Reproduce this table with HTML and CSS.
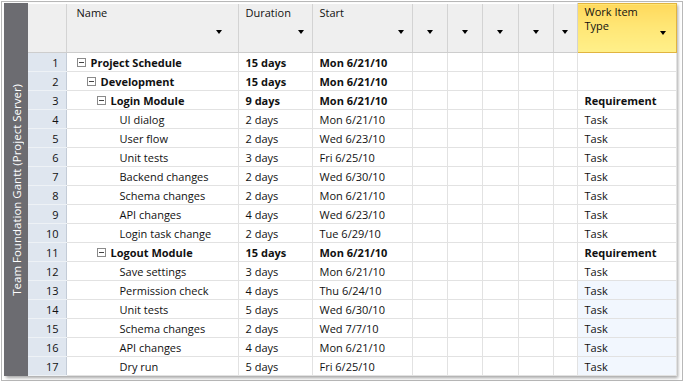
FILE: index.html
```html
<!DOCTYPE html>
<html lang="en">
<head>
    <meta charset="UTF-8">
    <title>Team Foundation Gantt</title>
    <link rel="stylesheet" href="styles.css">
</head>
<body>
    <div class="frame">
        <div class="panel">
            <div class="sidebar"><span>Team Foundation Gantt (Project Server)</span></div>
            <table class="grid">
                <colgroup>
                    <col class="c-num"><col class="c-name"><col class="c-dur"><col class="c-start">
                    <col class="c-x1"><col class="c-x2"><col class="c-x3"><col class="c-x4"><col class="c-x5">
                    <col class="c-wit">
                </colgroup>
                <thead>
                    <tr>
                        <th class="corner"></th>
                        <th><div class="hd name-hd"><span>Name</span><i class="arrow"></i></div></th>
                        <th><div class="hd"><span>Duration</span><i class="arrow"></i></div></th>
                        <th><div class="hd"><span>Start</span><i class="arrow"></i></div></th>
                        <th><div class="hd blank"><span></span><i class="arrow"></i></div></th>
                        <th><div class="hd blank"><span></span><i class="arrow"></i></div></th>
                        <th><div class="hd blank"><span></span><i class="arrow"></i></div></th>
                        <th><div class="hd blank"><span></span><i class="arrow"></i></div></th>
                        <th><div class="hd blank"><span></span><i class="arrow"></i></div></th>
                        <th class="wit-hd"><div class="hd"><span>Work Item<br>Type</span><i class="arrow"></i></div></th>
                    </tr>
                </thead>
                <tbody>
                    <tr class="summary">
                        <td class="num">1</td>
                        <td><div class="task lvl0"><i class="minus"></i>Project Schedule</div></td>
                        <td>15 days</td><td>Mon 6/21/10</td>
                        <td></td><td></td><td></td><td></td><td></td><td class="wit"></td>
                    </tr>
                    <tr class="summary">
                        <td class="num">2</td>
                        <td><div class="task lvl1"><i class="minus"></i>Development</div></td>
                        <td>15 days</td><td>Mon 6/21/10</td>
                        <td></td><td></td><td></td><td></td><td></td><td class="wit"></td>
                    </tr>
                    <tr class="summary">
                        <td class="num">3</td>
                        <td><div class="task lvl2"><i class="minus"></i>Login Module</div></td>
                        <td>9 days</td><td>Mon 6/21/10</td>
                        <td></td><td></td><td></td><td></td><td></td><td class="wit">Requirement</td>
                    </tr>
                    <tr>
                        <td class="num">4</td>
                        <td><div class="task lvl3">UI dialog</div></td>
                        <td>2 days</td><td>Mon 6/21/10</td>
                        <td></td><td></td><td></td><td></td><td></td><td class="wit">Task</td>
                    </tr>
                    <tr>
                        <td class="num">5</td>
                        <td><div class="task lvl3">User flow</div></td>
                        <td>2 days</td><td>Wed 6/23/10</td>
                        <td></td><td></td><td></td><td></td><td></td><td class="wit">Task</td>
                    </tr>
                    <tr>
                        <td class="num">6</td>
                        <td><div class="task lvl3">Unit tests</div></td>
                        <td>3 days</td><td>Fri 6/25/10</td>
                        <td></td><td></td><td></td><td></td><td></td><td class="wit">Task</td>
                    </tr>
                    <tr>
                        <td class="num">7</td>
                        <td><div class="task lvl3">Backend changes</div></td>
                        <td>2 days</td><td>Wed 6/30/10</td>
                        <td></td><td></td><td></td><td></td><td></td><td class="wit">Task</td>
                    </tr>
                    <tr>
                        <td class="num">8</td>
                        <td><div class="task lvl3">Schema changes</div></td>
                        <td>2 days</td><td>Mon 6/21/10</td>
                        <td></td><td></td><td></td><td></td><td></td><td class="wit">Task</td>
                    </tr>
                    <tr>
                        <td class="num">9</td>
                        <td><div class="task lvl3">API changes</div></td>
                        <td>4 days</td><td>Wed 6/23/10</td>
                        <td></td><td></td><td></td><td></td><td></td><td class="wit">Task</td>
                    </tr>
                    <tr>
                        <td class="num">10</td>
                        <td><div class="task lvl3">Login task change</div></td>
                        <td>2 days</td><td>Tue 6/29/10</td>
                        <td></td><td></td><td></td><td></td><td></td><td class="wit">Task</td>
                    </tr>
                    <tr class="summary">
                        <td class="num">11</td>
                        <td><div class="task lvl2"><i class="minus"></i>Logout Module</div></td>
                        <td>15 days</td><td>Mon 6/21/10</td>
                        <td></td><td></td><td></td><td></td><td></td><td class="wit">Requirement</td>
                    </tr>
                    <tr>
                        <td class="num">12</td>
                        <td><div class="task lvl3">Save settings</div></td>
                        <td>3 days</td><td>Mon 6/21/10</td>
                        <td></td><td></td><td></td><td></td><td></td><td class="wit">Task</td>
                    </tr>
                    <tr class="picked">
                        <td class="num">13</td>
                        <td><div class="task lvl3">Permission check</div></td>
                        <td>4 days</td><td>Thu 6/24/10</td>
                        <td></td><td></td><td></td><td></td><td></td><td class="wit">Task</td>
                    </tr>
                    <tr class="picked">
                        <td class="num">14</td>
                        <td><div class="task lvl3">Unit tests</div></td>
                        <td>5 days</td><td>Wed 6/30/10</td>
                        <td></td><td></td><td></td><td></td><td></td><td class="wit">Task</td>
                    </tr>
                    <tr class="picked">
                        <td class="num">15</td>
                        <td><div class="task lvl3">Schema changes</div></td>
                        <td>2 days</td><td>Wed 7/7/10</td>
                        <td></td><td></td><td></td><td></td><td></td><td class="wit">Task</td>
                    </tr>
                    <tr class="picked">
                        <td class="num">16</td>
                        <td><div class="task lvl3">API changes</div></td>
                        <td>4 days</td><td>Mon 6/21/10</td>
                        <td></td><td></td><td></td><td></td><td></td><td class="wit">Task</td>
                    </tr>
                    <tr class="picked">
                        <td class="num">17</td>
                        <td><div class="task lvl3">Dry run</div></td>
                        <td>5 days</td><td>Fri 6/25/10</td>
                        <td></td><td></td><td></td><td></td><td></td><td class="wit">Task</td>
                    </tr>
                </tbody>
            </table>
        </div>
    </div>
</body>
</html>
```

FILE: styles.css
```css
body {
    margin: 0;
    padding: 1px;
    background-color: white;
    font-family: 'Open Sans', 'Noto Sans', sans-serif;
    font-size: 11px;
    color: #111;
}
.frame {
    width: 682px;
    height: 380px;
    box-sizing: border-box;
    border: 1px solid #b8b8b8;
    padding: 1px 0 0 2px;
}
.panel {
    display: flex;
    width: 672px;
    height: 373px;
    box-shadow: 2px 2px 3px rgba(0, 0, 0, 0.35);
}
.sidebar {
    width: 24px;
    flex-shrink: 0;
    background-color: #6c6c71;
    color: white;
    display: flex;
    align-items: center;
    justify-content: center;
}
.sidebar span {
    writing-mode: vertical-rl;
    transform: rotate(180deg);
    white-space: nowrap;
    font-size: 11.5px;
}
.grid {
    border-collapse: collapse;
    table-layout: fixed;
    width: 648px;
}
.c-num { width: 38px; }
.c-name { width: 172px; }
.c-dur { width: 74px; }
.c-start { width: 100px; }
.c-x1, .c-x2, .c-x4 { width: 35px; }
.c-x3 { width: 36px; }
.c-x5 { width: 24px; }
.c-wit { width: 99px; }

th {
    background-color: #efefef;
    border-right: 1px solid #d3d3d3;
    border-bottom: 1px solid #cdcdcd;
    padding: 0;
    height: 48px;
    font-weight: normal;
    text-align: left;
    vertical-align: top;
}
.hd {
    height: 48px;
    box-sizing: border-box;
    padding: 2px 8px 0 7px;
    display: flex;
    flex-direction: column;
}
.hd span {
    line-height: 14px;
    height: 24px;
}
.hd .arrow {
    align-self: flex-end;
    width: 0;
    height: 0;
    border-left: 3.5px solid transparent;
    border-right: 3.5px solid transparent;
    border-top: 4px solid #000;
}
.name-hd { padding-right: 16px; padding-left: 10px; }
.hd.blank { padding: 2px 0 0 0; }
.hd.blank .arrow { align-self: center; }
th.wit-hd {
    background: linear-gradient(#ffd95c, #ffe675 45%, #fff08a);
    border: 1px solid #e1b440;
}
th.wit-hd .hd {
    padding-right: 10px;
    padding-top: 1px;
}
th.wit-hd .hd span {
    height: 26px;
    line-height: 14px;
}

td {
    height: 18px;
    padding: 0 7px;
    border-right: 1px solid #e2e2e2;
    border-bottom: 1px solid #e2e2e2;
    white-space: nowrap;
    overflow: hidden;
}
td.num {
    background-color: #dfe6ef;
    border-right: 1px solid #c4ccd7;
    border-bottom: 1px solid #eef2f6;
    text-align: right;
}
.summary td {
    font-weight: bold;
}
.summary td.num {
    font-weight: normal;
}
.picked td.wit {
    background-color: #f2f7fe;
}
.task {
    display: flex;
    align-items: center;
}
.lvl0 { padding-left: 3px; }
.lvl1 { padding-left: 13px; }
.lvl2 { padding-left: 23px; }
.lvl3 { padding-left: 46px; }
.minus {
    width: 7px;
    height: 7px;
    border: 1px solid #8a8a8a;
    background: linear-gradient(#444, #444) center / 5px 1px no-repeat, white;
    margin-right: 5px;
}
```
